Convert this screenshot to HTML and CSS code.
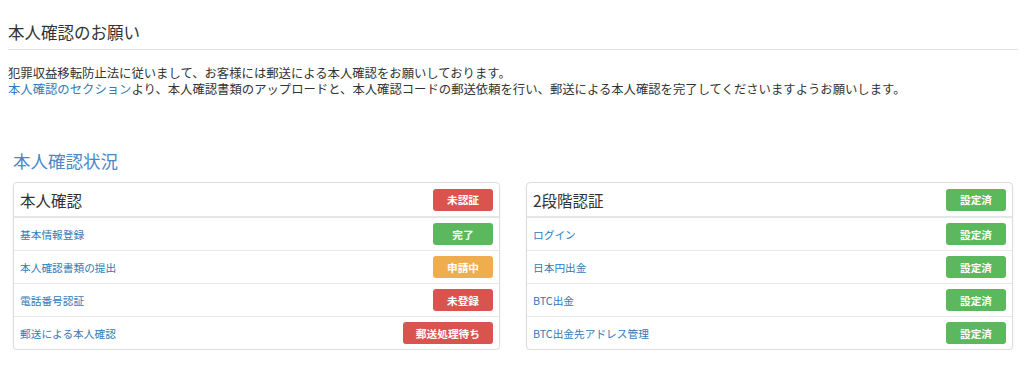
FILE: index.html
```html
<!DOCTYPE html>
<html lang="ja">
<head>
    <meta charset="UTF-8">
    <meta name="viewport" content="width=device-width, initial-scale=1.0">
    <title>本人確認のお願い</title>
    <link rel="stylesheet" href="styles.css">
</head>
<body>
    <div class="page">
        <h1 class="page-title">本人確認のお願い</h1>
        <p class="notice">
            犯罪収益移転防止法に従いまして、お客様には郵送による本人確認をお願いしております。<br>
            <a href="#" class="link">本人確認のセクション</a>より、本人確認書類のアップロードと、本人確認コードの郵送依頼を行い、郵送による本人確認を完了してくださいますようお願いします。
        </p>

        <section class="status">
            <h2 class="status-title">本人確認状況</h2>
            <div class="panels">
                <div class="panel">
                    <div class="panel-head">
                        <span class="panel-name">本人確認</span>
                        <span class="badge badge-red">未認証</span>
                    </div>
                    <div class="row">
                        <a href="#" class="row-link">基本情報登録</a>
                        <span class="badge badge-green">完了</span>
                    </div>
                    <div class="row">
                        <a href="#" class="row-link">本人確認書類の提出</a>
                        <span class="badge badge-orange">申請中</span>
                    </div>
                    <div class="row">
                        <a href="#" class="row-link">電話番号認証</a>
                        <span class="badge badge-red">未登録</span>
                    </div>
                    <div class="row">
                        <a href="#" class="row-link">郵送による本人確認</a>
                        <span class="badge badge-red">郵送処理待ち</span>
                    </div>
                </div>

                <div class="panel">
                    <div class="panel-head">
                        <span class="panel-name">2段階認証</span>
                        <span class="badge badge-green">設定済</span>
                    </div>
                    <div class="row">
                        <a href="#" class="row-link">ログイン</a>
                        <span class="badge badge-green">設定済</span>
                    </div>
                    <div class="row">
                        <a href="#" class="row-link">日本円出金</a>
                        <span class="badge badge-green">設定済</span>
                    </div>
                    <div class="row">
                        <a href="#" class="row-link">BTC出金</a>
                        <span class="badge badge-green">設定済</span>
                    </div>
                    <div class="row">
                        <a href="#" class="row-link">BTC出金先アドレス管理</a>
                        <span class="badge badge-green">設定済</span>
                    </div>
                </div>
            </div>
        </section>
    </div>
</body>
</html>
```

FILE: styles.css
```css
body {
    margin:0;
    background:#fff;
    color:#333;
    font-family:"Noto Sans CJK JP", "Noto Sans", sans-serif;
}
a {text-decoration:none;}
.page {
    padding:0 6px 0 8px;
}
.page-title {
    margin:22px 0 0;
    padding-bottom:7px;
    border-bottom:1px solid #e3e3e3;
    font-size:16.5px;
    line-height:20px;
    font-weight:normal;
    color:#333;
}
.notice {
    margin:15px 0 0;
    font-size:12.35px;
    line-height:16px;
}
.link {color:#337ab7;}
.status {
    margin:53px 0 0 5px;
}
.status-title {
    margin:0 0 10px;
    font-size:17.5px;
    line-height:22px;
    font-weight:normal;
    color:#4a88c7;
}
.panels {
    display:grid;
    grid-template-columns:487px 487px;
    gap:26px;
}
.panel {
    border:1px solid #ddd;
    border-radius:4px;
    box-shadow:0 1px 2px rgba(0,0,0,0.08);
}
.panel-head, .row {
    display:flex;
    align-items:center;
    justify-content:space-between;
    padding:0 6px 0 6px;
}
.panel-head {
    height:33px;
    border-bottom:2px solid #e6e6e6;
}
.panel-name {
    font-size:15.5px;
    color:#333;
}
.row {
    height:32px;
    border-top:1px solid #e8e8e8;
}
.panel-head + .row {border-top:none;}
.row-link {
    font-size:10.7px;
    color:#337ab7;
}
.badge {
    display:inline-flex;
    align-items:center;
    justify-content:center;
    box-sizing:border-box;
    height:22px;
    padding:0 13px;
    border-radius:3px;
    color:#fff;
    font-size:10.7px;
    font-weight:bold;
}
.panel .badge {min-width:60px;}
.badge-red {background:#d9534f;}
.badge-green {background:#5cb85c;}
.badge-orange {background:#f0ad4e;}
```
